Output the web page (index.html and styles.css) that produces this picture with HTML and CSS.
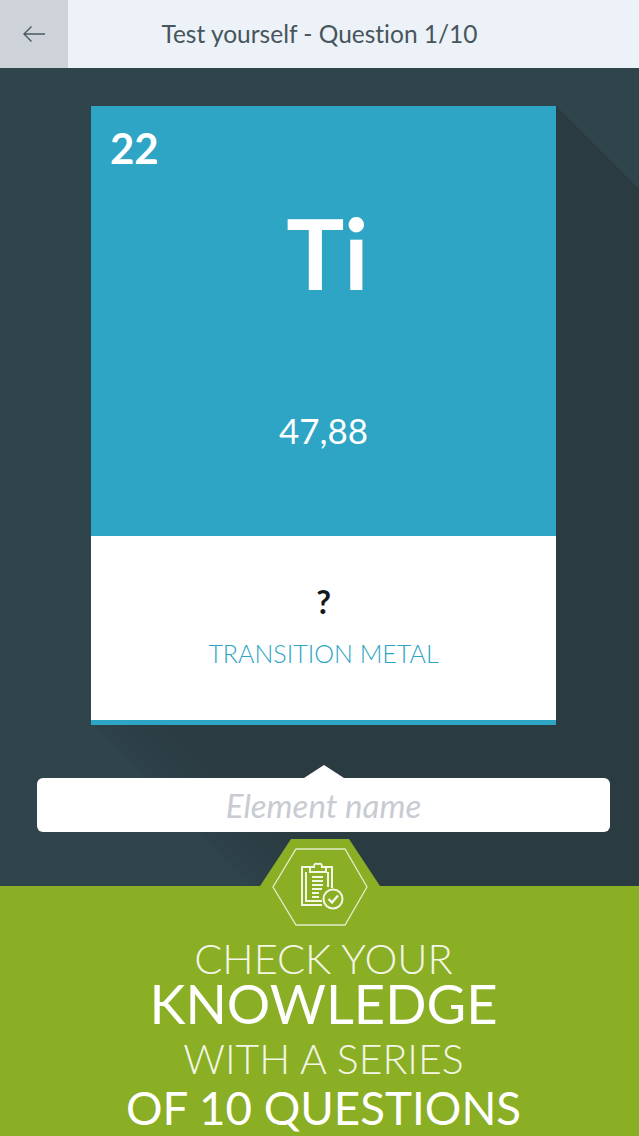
FILE: index.html
```html
<!DOCTYPE html>
<html lang="en">
<head>
<meta charset="utf-8">
<title>Test yourself</title>
<link rel="stylesheet" href="styles.css">
</head>
<body>
<div class="app">
  <header class="topbar">
    <button class="back" aria-label="Back">
      <svg width="24" height="18" viewBox="0 0 24 18"><path d="M23 9H2M9.500 1.500 2 9l7.500 7.500" fill="none" stroke="#4a5a60" stroke-width="1.400"/></svg>
    </button>
    <h1 class="title">Test yourself - Question 1/10</h1>
  </header>
  <main class="stage">
    <svg class="long-shadow" width="639" height="818" viewBox="0 0 639 818">
      <defs>
        <linearGradient id="shade" gradientUnits="userSpaceOnUse" x1="170" y1="737" x2="215" y2="692">
          <stop offset="0" stop-color="#2e4249"/>
          <stop offset="1" stop-color="#2b3b42"/>
        </linearGradient>
      </defs>
      <polygon points="556,38 639,121 639,818 250,818 91,657" fill="url(#shade)"/>
    </svg>
    <section class="card">
      <div class="card-top">
        <div class="number">22</div>
        <div class="symbol">Ti</div>
        <div class="mass">47,88</div>
      </div>
      <div class="card-bottom">
        <div class="unknown">?</div>
        <div class="category">TRANSITION METAL</div>
      </div>
    </section>
    <div class="answer">
      <span class="notch"></span>
      <span class="placeholder">Element name</span>
    </div>
  </main>
  <footer class="promo">
    <div class="badge">
      <svg width="120" height="90" viewBox="0 0 120 90">
        <polygon points="31,0 89,0 120,47 120,90 0,90 0,47" fill="#8aae24"/>
        <polygon points="36,10 85,10 107,48 85,86 36,86 13,48" fill="none" stroke="#e4edc8" stroke-width="1.300"/>
        <g fill="none" stroke="#f4f7e6" stroke-width="2">
          <path d="M49 28H42V66H62"/>
          <path d="M46 33V62H62"/>
          <path d="M66 28H72V49"/>
          <path d="M68 33V48"/>
          <path d="M50 33V28H54C54 23 57 25 58 25S62 23 62 28H66V33Z"/>
          <path d="M52 38H63M52 42H63M52 46H63M52 50H62M52 54H59M52 58H59"/>
          <circle cx="73" cy="60" r="9.500"/>
          <path d="M68.500 60L72 63.500L78 56.500" stroke-width="2.400"/>
        </g>
      </svg>
    </div>
    <p class="line light first">CHECK YOUR</p>
    <p class="line big">KNOWLEDGE</p>
    <p class="line light second">WITH A SERIES</p>
    <p class="line medium">OF 10 QUESTIONS</p>
  </footer>
</div>
</body>
</html>
```

FILE: styles.css
```css
* { box-sizing: border-box; }
html, body { margin: 0; padding: 0; }
body { font-family: Lato, "Open Sans", sans-serif; background: #2f444b; }
.app { width: 639px; height: 1136px; overflow: hidden; display: flex; flex-direction: column; }

.topbar { height: 68px; display: flex; align-items: center; background: #edf1f8; flex: none; }
.back { width: 68px; height: 68px; border: 0; padding: 0; background: #ced2d9; display: flex; align-items: center; justify-content: center; }
.title { margin: 0; width: 503px; text-align: center; font-size: 24.500px; font-weight: 400; color: #46565c; line-height: 68px; font-variant-ligatures: none; }

.stage { position: relative; flex: 1; padding: 38px 0 0 8px; display: flex; flex-direction: column; align-items: center; background: #2f444b; }
.long-shadow { position: absolute; left: 0; top: 0; }

.card { position: relative; width: 465px; height: 619px; background: #fff; border-bottom: 5px solid #2ea5c5; display: flex; flex-direction: column; }
.card-top { height: 430px; background: #2ea5c5; color: #fff; display: flex; flex-direction: column; position: relative; align-items: center; }
.number { align-self: flex-start; margin: 18px 0 0 19px; font-size: 42px; line-height: 49px; font-weight: 700; }
.symbol { margin: 22px 0 0 8px; font-size: 97px; line-height: 116px; font-weight: 700; }
.mass { margin-top: 98px; font-size: 35px; line-height: 42px; font-weight: 400; }
.card-bottom { flex: 1; display: flex; flex-direction: column; align-items: center; }
.unknown { margin-top: 46px; font-size: 32px; line-height: 40px; font-weight: 700; color: #14181c; }
.category { margin-top: 15px; font-size: 25px; line-height: 32px; font-weight: 300; color: #2ea5c5; }

.answer { position: relative; margin-top: 53px; width: 573px; height: 54px; background: #fff; border-radius: 6px; display: flex; align-items: center; justify-content: center; }
.notch { position: absolute; left: 267px; top: -13px; width: 0; height: 0; border-left: 20px solid transparent; border-right: 20px solid transparent; border-bottom: 13px solid #fff; }
.placeholder { font-size: 33px; font-style: italic; font-weight: 400; color: #c8cbd2; }

.promo { position: relative; flex: none; height: 250px; padding-left: 8px; background: #8aae24; color: #fff; display: flex; flex-direction: column; align-items: center; }
.badge { position: absolute; left: 260px; top: -47px; line-height: 0; }
.line { margin: 0; white-space: nowrap; }
.light { font-weight: 300; color: #f3f6e6; }
.first { margin-top: 50px; font-size: 41.500px; line-height: 44px; }
.big { font-size: 54.300px; font-weight: 400; line-height: 46px; }
.second { margin-top: 8px; font-size: 41px; line-height: 50px; }
.medium { font-size: 45.700px; font-weight: 400; line-height: 48px; }
```
